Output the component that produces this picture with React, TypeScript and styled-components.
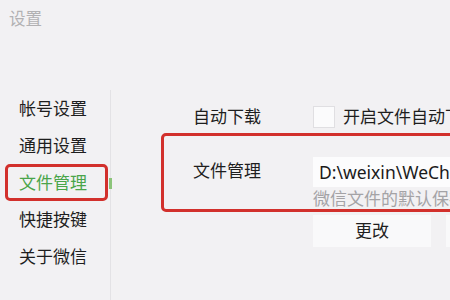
import React from 'react'
import styled, { createGlobalStyle } from 'styled-components'

const GlobalStyle = createGlobalStyle`
  html, body {
    margin: 0;
    padding: 0;
    background: #f2f1f3;
  }
  body {
    font-family: "Noto Sans", "Noto Sans CJK SC", sans-serif;
    color: #1e1e1e;
  }
`

const Window = styled.div`
  width: 450px;
  height: 300px;
  overflow: hidden;
  background: #f2f1f3;
  display: flex;
  flex-direction: column;
`

const Title = styled.div`
  height: 90px;
  padding: 8px 0 0 9px;
  box-sizing: border-box;
  font-size: 16.5px;
  line-height: 22px;
  color: #b2b1b3;
`

const Body = styled.div`
  flex: 1;
  display: flex;
`

const Sidebar = styled.nav`
  width: 110px;
  flex-shrink: 0;
  border-right: 1px solid #e3e2e5;
  display: flex;
  flex-direction: column;
`

const NavItem = styled.div<{ $active?: boolean; $marked?: boolean }>`
  position: relative;
  width: 103px;
  height: 37px;
  margin-left: 5px;
  padding-left: 11px;
  box-sizing: border-box;
  border: 3px solid ${({ $marked }) => ($marked ? '#d2302c' : 'transparent')};
  border-radius: 5px;
  font-size: 17px;
  line-height: 31px;
  color: ${({ $active }) => ($active ? '#4aa54a' : '#1e1e1e')};

  &::after {
    content: '';
    display: ${({ $active }) => ($active ? 'block' : 'none')};
    position: absolute;
    right: -7px;
    top: 11px;
    width: 3px;
    height: 11px;
    background: #8cc47a;
  }
`

const Main = styled.main`
  flex: 1;
  min-width: 0;
  padding: 12px 0 0 50px;
  display: flex;
  flex-direction: column;
`

const Row = styled.div`
  display: flex;
  align-items: center;
  height: 30px;
  padding-left: 32px;
  white-space: nowrap;
`

const Label = styled.div`
  width: 120px;
  flex-shrink: 0;
  font-size: 17px;
  line-height: 22px;
`

const Checkbox = styled.span`
  width: 20px;
  height: 20px;
  flex-shrink: 0;
  background: #fbfbfc;
  border: 1px solid #e0dfe2;
  margin-right: 8px;
`

const CheckText = styled.span`
  font-size: 17px;
  line-height: 22px;
`

const Marked = styled.section`
  margin-top: 1px;
  width: 320px;
  height: 79px;
  box-sizing: border-box;
  border: 3px solid #d2302c;
  border-radius: 5px;
  padding: 21px 0 0 29px;
  display: flex;
  white-space: nowrap;
`

const PathLabel = styled(Label)`
  padding-top: 3px;
`

const PathColumn = styled.div`
  display: flex;
  flex-direction: column;
`

const PathBox = styled.div`
  width: 170px;
  height: 30px;
  background: #fcfcfd;
  padding-left: 6px;
  font-size: 17.5px;
  line-height: 30px;
  color: #1a1a1a;
`

const Hint = styled.div`
  margin-top: 1px;
  font-size: 17px;
  line-height: 21px;
  color: #a4a3a6;
`

const Buttons = styled.div`
  display: flex;
  gap: 15px;
  margin: 3px 0 0 152px;
`

const Button = styled.div`
  width: 118px;
  height: 32px;
  flex-shrink: 0;
  background: #f9f9fa;
  text-align: center;
  font-size: 17px;
  line-height: 32px;
`

const navItems = ['帐号设置', '通用设置', '文件管理', '快捷按键', '关于微信']

export default function App() {
  return (
    <Window>
      <GlobalStyle />
      <Title>设置</Title>
      <Body>
        <Sidebar>
          {navItems.map(item => (
            <NavItem key={item} $active={item === '文件管理'} $marked={item === '文件管理'}>
              {item}
            </NavItem>
          ))}
        </Sidebar>
        <Main>
          <Row>
            <Label>自动下载</Label>
            <Checkbox />
            <CheckText>开启文件自动下载</CheckText>
          </Row>
          <Marked>
            <PathLabel>文件管理</PathLabel>
            <PathColumn>
              <PathBox>D:\weixin\WeChat Files</PathBox>
              <Hint>微信文件的默认保存位置</Hint>
            </PathColumn>
          </Marked>
          <Buttons>
            <Button>更改</Button>
            <Button>打开文件夹</Button>
          </Buttons>
        </Main>
      </Body>
    </Window>
  )
}
